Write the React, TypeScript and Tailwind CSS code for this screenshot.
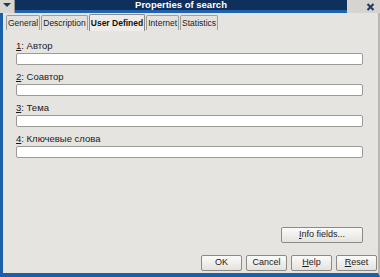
import React from 'react';

const fields = [
    {key: '1', label: 'Автор'},
    {key: '2', label: 'Соавтор'},
    {key: '3', label: 'Тема'},
    {key: '4', label: 'Ключевые слова'},
];

const tabs = ['General', 'Description', 'User Defined', 'Internet', 'Statistics'];

// Small bevelled push button
const Button: React.FC<{ children: React.ReactNode; className?: string }> = ({children, className = ''}) => (
    <div
        className={`flex items-center justify-center h-[16px] rounded-[2px] border border-[#8d8a86] bg-gradient-to-b from-[#fbfbfa] to-[#e4e2de] text-[9px] text-[#1a1a1a] ${className}`}>
        {children}
    </div>
);

const App: React.FC = () => {
    return (
        <div className="w-[380px] h-[277px] flex flex-col bg-[#e6e4e0] overflow-hidden"
             style={{fontFamily: '"Liberation Sans", Arial, sans-serif'}}>
            {/* Title bar */}
            <div className="flex h-[13px] bg-[#e6e4e0]">
                <div className="w-[15px] flex items-start justify-center pt-[2px] bg-[#d8d6d2] border-r border-[#9a9894]">
                    <svg width="8" height="6" viewBox="0 0 8 6">
                        <path d="M0 1 L8 1 L4 5 Z" fill="#2a3548"/>
                    </svg>
                </div>
                <div className="flex-1 flex flex-col">
                    <div
                        className="flex-1 bg-[#0f2f5c] flex items-center justify-center text-white font-bold text-[9.5px] leading-none">
                        Properties of search
                    </div>
                    <div className="h-[3px] bg-[#1f63b0]"/>
                </div>
                <div className="w-[33px] flex items-center justify-end pr-[5px] bg-[#d6d4d0]">
                    <svg width="9" height="8" viewBox="0 0 9 8">
                        <path d="M1.5 1 L7.5 7 M7.5 1 L1.5 7" stroke="#1f3a5c" strokeWidth="2"/>
                    </svg>
                </div>
            </div>

            <div className="flex-1 flex flex-col border-l-[3px] border-l-[#1a5fa8] border-r-[2px] border-r-[#b8b6b2] border-b-[4px] border-b-[#1a5fa8]">
                {/* Tabs */}
                <div className="flex items-end pl-[3px] pt-[2px] h-[17px]">
                    {tabs.map(t => {
                        const active = t === 'User Defined';
                        return (
                            <div key={t}
                                 className={active
                                     ? 'h-[17px] px-[1px] mr-[1px] flex items-center border border-b-0 border-[#8d8a86] rounded-t-[2px] bg-[#eeece8] text-[8.5px] font-bold text-[#111] -mb-[1px]'
                                     : 'h-[15px] px-[1px] mr-[1px] flex items-center border border-b-0 border-[#a09e9a] rounded-t-[2px] bg-[#e4e2de] text-[8.5px] text-[#222]'}>
                                {t}
                            </div>
                        );
                    })}
                </div>

                {/* Page */}
                <div className="flex-1 flex flex-col pl-[13px] pr-[15px] pt-[9px]">
                    {fields.map(f => (
                        <div key={f.key} className="flex flex-col mb-[5px]">
                            <div className="text-[9.5px] text-[#1a1a1a] leading-none h-[14px] pt-[2px]">
                                <span className="underline">{f.key}</span>: {f.label}
                            </div>
                            <div className="h-[12px] bg-white border border-[#9c9a96] rounded-[2px]"/>
                        </div>
                    ))}
                    <div className="flex-1"/>
                    <div className="flex justify-end mb-[12px]">
                        <Button className="w-[82px]"><span><span className="underline">I</span>nfo fields...</span></Button>
                    </div>
                </div>

                {/* Dialog buttons */}
                <div className="flex justify-end gap-[4px] pr-[1px] pb-[2px]">
                    <Button className="w-[41px] border-[#3a78c0]">OK</Button>
                    <Button className="w-[41px]">Cancel</Button>
                    <Button className="w-[41px]"><span><span className="underline">H</span>elp</span></Button>
                    <Button className="w-[41px]"><span><span className="underline">R</span>eset</span></Button>
                </div>
            </div>
        </div>
    );
};

export default App;
